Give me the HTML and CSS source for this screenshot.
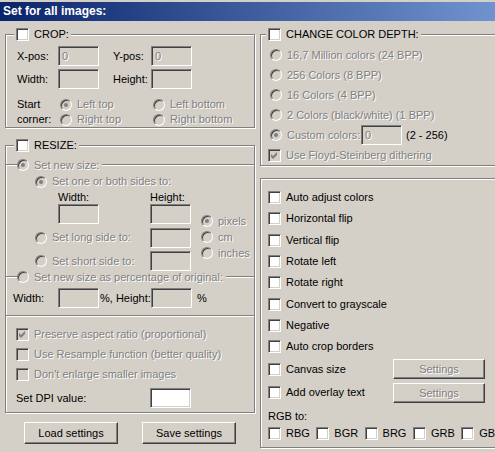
FILE: index.html
```html
<!DOCTYPE html>
<html lang="en">
<head>
    <meta charset="UTF-8">
    <title>Batch settings</title>
    <link rel="stylesheet" href="styles.css">
</head>
<body>

<div class="titlebar">Set for all images:</div>

<div class="panes">
    <div class="pane-left">
        <fieldset class="group crop">
            <legend><span class="opt"><span class="cb"></span>CROP:</span></legend>
            <div class="crop-grid">
                <span>X-pos:</span><span class="field dis">0</span><span></span><span>Y-pos:</span><span class="field dis">0</span>
                <span>Width:</span><span class="field"></span><span></span><span>Height:</span><span class="field"></span>
            </div>
            <div class="corner-grid">
                <span>Start</span>
                <span class="opt dis"><span class="rb on"></span>Left top</span>
                <span class="opt dis"><span class="rb"></span>Left bottom</span>
                <span>corner:</span>
                <span class="opt dis"><span class="rb"></span>Right top</span>
                <span class="opt dis"><span class="rb"></span>Right bottom</span>
            </div>
        </fieldset>

        <fieldset class="group resize">
            <legend><span class="opt"><span class="cb"></span>RESIZE:</span></legend>
            <div class="subhead">
                <span class="hline lead"></span>
                <span class="opt dis"><span class="rb on"></span>Set new size:</span>
                <span class="hline"></span>
            </div>
            <div class="sides">
                <span class="opt dis"><span class="rb on"></span>Set one or both sides to:</span>
            </div>
            <div class="size-labels">
                <span class="size-w">Width:</span><span>Height:</span>
            </div>
            <div class="size-grid">
                <span class="field size-w"></span>
                <span class="field"></span>
                <div class="units">
                    <span class="opt dis"><span class="rb on"></span>pixels</span>
                    <span class="opt dis"><span class="rb"></span>cm</span>
                    <span class="opt dis"><span class="rb"></span>inches</span>
                </div>
                <span class="opt dis"><span class="rb"></span>Set long side to:</span>
                <span class="field"></span>
                <span class="opt dis"><span class="rb"></span>Set short side to:</span>
                <span class="field"></span>
            </div>
            <div class="subhead pct">
                <span class="hline lead"></span>
                <span class="opt dis"><span class="rb"></span>Set new size as percentage of original:</span>
                <span class="hline"></span>
            </div>
            <div class="pct-row">
                <span class="pct-w">Width:</span>
                <span class="field"></span>
                <span class="pct-h">%, Height:</span>
                <span class="field"></span>
                <span class="pct-sign">%</span>
            </div>
            <div class="hline sep"></div>
            <div class="check-list">
                <span class="opt dis"><span class="cb off"><svg viewBox="0 0 7 7"><path d="M0 2 L2 4 L6 0 L6 3 L2 7 L0 5Z"/></svg></span>Preserve aspect ratio (proportional)</span>
                <span class="opt dis"><span class="cb off"></span>Use Resample function (better quality)</span>
                <span class="opt dis"><span class="cb off"></span>Don't enlarge smaller images</span>
            </div>
            <div class="dpi-row">
                <span class="dpi-label">Set DPI value:</span>
                <span class="field white"></span>
            </div>
        </fieldset>

        <div class="bottom-buttons">
            <button class="btn">Load settings</button>
            <button class="btn">Save settings</button>
        </div>
    </div>

    <div class="pane-right">
        <fieldset class="group depth">
            <legend><span class="opt"><span class="cb"></span>CHANGE COLOR DEPTH:</span></legend>
            <div class="depth-list">
                <span class="opt dis"><span class="rb"></span>16,7 Million colors (24 BPP)</span>
                <span class="opt dis"><span class="rb"></span>256 Colors (8 BPP)</span>
                <span class="opt dis"><span class="rb"></span>16 Colors (4 BPP)</span>
                <span class="opt dis"><span class="rb"></span>2 Colors (black/white) (1 BPP)</span>
                <span class="custom-row">
                    <span class="opt dis custom-label"><span class="rb on"></span>Custom colors:</span>
                    <span class="field dis">0</span>
                    <span class="custom-range">(2 - 256)</span>
                </span>
                <span class="opt dis floyd"><span class="cb off"><svg viewBox="0 0 7 7"><path d="M0 2 L2 4 L6 0 L6 3 L2 7 L0 5Z"/></svg></span>Use Floyd-Steinberg dithering</span>
            </div>
        </fieldset>

        <fieldset class="group effects">
            <span class="opt row"><span class="cb"></span>Auto adjust colors</span>
            <span class="opt row"><span class="cb"></span>Horizontal flip</span>
            <span class="opt row"><span class="cb"></span>Vertical flip</span>
            <span class="opt row"><span class="cb"></span>Rotate left</span>
            <span class="opt row"><span class="cb"></span>Rotate right</span>
            <span class="opt row"><span class="cb"></span>Convert to grayscale</span>
            <span class="opt row"><span class="cb"></span>Negative</span>
            <span class="opt row"><span class="cb"></span>Auto crop borders</span>
            <span class="opt row tall"><span class="cb"></span><span class="eff-label">Canvas size</span><button class="btn small dis">Settings</button></span>
            <span class="opt row tall"><span class="cb"></span><span class="eff-label">Add overlay text</span><button class="btn small dis">Settings</button></span>
            <div class="rgb-title">RGB to:</div>
            <div class="rgb-row">
                <span class="opt"><span class="cb"></span>RBG</span>
                <span class="opt"><span class="cb"></span>BGR</span>
                <span class="opt"><span class="cb"></span>BRG</span>
                <span class="opt"><span class="cb"></span>GRB</span>
                <span class="opt"><span class="cb"></span>GBR</span>
            </div>
        </fieldset>
    </div>
</div>

</body>
</html>
```

FILE: styles.css
```css
body {
    margin: 0;
    padding-top: 2px;
    width: 495px;
    height: 452px;
    box-sizing: border-box;
    overflow: hidden;
    background-color: #d4d0c8;
    font-family: "Liberation Sans", Arial, sans-serif;
    font-size: 11px;
    line-height: 13px;
    color: #000;
}

.titlebar {
    height: 19px;
    line-height: 19px;
    padding-left: 3px;
    font-size: 12px;
    font-weight: bold;
    color: #fff;
    background: linear-gradient(to right, #0a246a, #7093d0);
}

.panes {
    display: flex;
    gap: 5px;
    padding-left: 5px;
}

.pane-left {
    flex: none;
    width: 250px;
}

.pane-right {
    flex: none;
    width: 260px;
}

/* group boxes */
.group {
    margin: 0;
    padding: 0;
    min-width: 0;
    box-sizing: border-box;
    border: 1px solid #808080;
    box-shadow: 1px 1px 0 #fff, inset 1px 1px 0 #fff;
}

.group legend {
    margin-left: 8px;
    padding: 0 2px;
    height: 13px;
    background-color: #d4d0c8;
}

.pane-right .group legend {
    margin-left: 5px;
}

.opt {
    display: flex;
    align-items: center;
    gap: 5px;
    white-space: nowrap;
}

.dis {
    color: #808080;
    text-shadow: 1px 1px 0 #fff;
}

/* checkbox and radio */
.cb {
    flex: none;
    position: relative;
    width: 11px;
    height: 11px;
    border: 1px solid;
    border-color: #808080 #fff #fff #808080;
    box-shadow: inset 1px 1px 0 #404040, inset -1px -1px 0 #d4d0c8;
    background-color: #fff;
}

.cb.off {
    background-color: #d4d0c8;
}

.cb svg {
    display: block;
    width: 7px;
    height: 7px;
    margin: 2px 0 0 2px;
    fill: #808080;
}

.rb {
    flex: none;
    position: relative;
    width: 10px;
    height: 10px;
    border: 1px solid;
    border-color: #808080 #fff #fff #808080;
    border-radius: 50%;
    box-shadow: inset 1px 1px 0 #404040, inset -1px -1px 0 #d4d0c8;
    background-color: #d4d0c8;
}

.rb.on::after {
    content: "";
    position: absolute;
    left: 3px;
    top: 3px;
    width: 4px;
    height: 4px;
    border-radius: 50%;
    background-color: #808080;
}

/* text boxes */
.field {
    flex: none;
    box-sizing: border-box;
    width: 41px;
    height: 20px;
    padding-left: 3px;
    display: flex;
    align-items: center;
    border: 1px solid;
    border-color: #808080 #fff #fff #808080;
    box-shadow: inset 1px 1px 0 #404040, inset -1px -1px 0 #d4d0c8;
    background-color: #d4d0c8;
}

.field.white {
    background-color: #fff;
}

.hline {
    height: 0;
    border-top: 1px solid #808080;
    border-bottom: 1px solid #fff;
    flex: 1;
}

.hline.lead {
    flex: none;
    width: 11px;
}

/* crop */
.crop {
    margin-top: 7px;
}

.crop-grid {
    display: grid;
    grid-template-columns: 41px 41px 14px 38px 41px;
    grid-template-rows: 20px 20px;
    row-gap: 3px;
    align-items: center;
    margin: 5px 0 0 11px;
}

.corner-grid {
    display: grid;
    grid-template-columns: 43px 93px auto;
    grid-auto-rows: 15px;
    align-items: center;
    margin: 8px 0 0 11px;
}

/* resize */
.resize {
    margin-top: 11px;
    padding-bottom: 4px;
}

.subhead {
    display: flex;
    align-items: center;
    height: 12px;
    margin-top: 7px;
}

.subhead .opt {
    margin-right: 3px;
}

.subhead.pct {
    margin-top: 0;
}

.sides {
    height: 12px;
    margin-top: 4px;
    padding-left: 29px;
}

.size-labels {
    display: flex;
    height: 13px;
    margin-top: 4px;
    padding-left: 29px;
}

.size-labels .size-w {
    width: 92px;
    margin-left: 23px;
}

.size-grid {
    display: grid;
    grid-template-columns: 115px 41px auto;
    grid-template-rows: 20px 20px 20px;
    row-gap: 3.5px;
    align-items: center;
    padding-left: 29px;
}

.size-grid .size-w {
    margin-left: 23px;
}

.units {
    grid-column: 3;
    grid-row: 1 / span 3;
    align-self: start;
    margin-left: 10px;
    padding-top: 9px;
}

.units .opt {
    height: 16px;
}

.pct-row {
    display: flex;
    align-items: center;
    height: 20px;
    margin-top: 5px;
    padding-left: 7px;
    white-space: nowrap;
}

.pct-w {
    width: 45px;
}

.pct-h {
    width: 51px;
    margin-left: 1px;
}

.pct-sign {
    margin-left: 5px;
}

.sep {
    margin-top: 7px;
}

.check-list {
    margin-top: 7px;
    padding-left: 10px;
}

.check-list .opt {
    height: 20px;
}

.dpi-row {
    display: flex;
    align-items: center;
    height: 20px;
    margin-top: 4px;
    padding-left: 10px;
}

.dpi-label {
    width: 134px;
}

/* buttons */
.btn {
    box-sizing: border-box;
    width: 94px;
    height: 22px;
    padding: 0;
    font-family: inherit;
    font-size: 11px;
    color: #000;
    background-color: #d4d0c8;
    border: 1px solid;
    border-color: #fff #404040 #404040 #fff;
    box-shadow: inset -1px -1px 0 #808080;
    border-radius: 0;
}

.btn.small {
    width: 92px;
    height: 20px;
}

.btn.dis {
    color: #808080;
    text-shadow: 1px 1px 0 #fff;
}

.bottom-buttons {
    display: flex;
    gap: 24px;
    margin: 9px 0 0 19px;
}

/* color depth */
.depth {
    margin-top: 7px;
}

.depth-list {
    padding: 4px 0 0 9px;
}

.depth-list > .opt,
.custom-row {
    height: 20px;
}

.custom-row {
    display: flex;
    align-items: center;
}

.custom-label {
    width: 91px;
}

.custom-range {
    margin-left: 4px;
}

.floyd {
    margin-left: -2px;
}

/* effects */
.effects {
    margin-top: 12px;
    padding: 8px 0 6.7px 7px;
}

.effects .row {
    height: 21.33px;
}

.effects .row.tall {
    height: 23.33px;
}

.eff-label {
    width: 102px;
}

.rgb-title {
    height: 14px;
    line-height: 14px;
    margin-top: 5px;
}

.rgb-row {
    display: flex;
    height: 14px;
    margin-top: 3px;
}

.rgb-row .opt {
    width: 48.3px;
    flex: none;
}
```
